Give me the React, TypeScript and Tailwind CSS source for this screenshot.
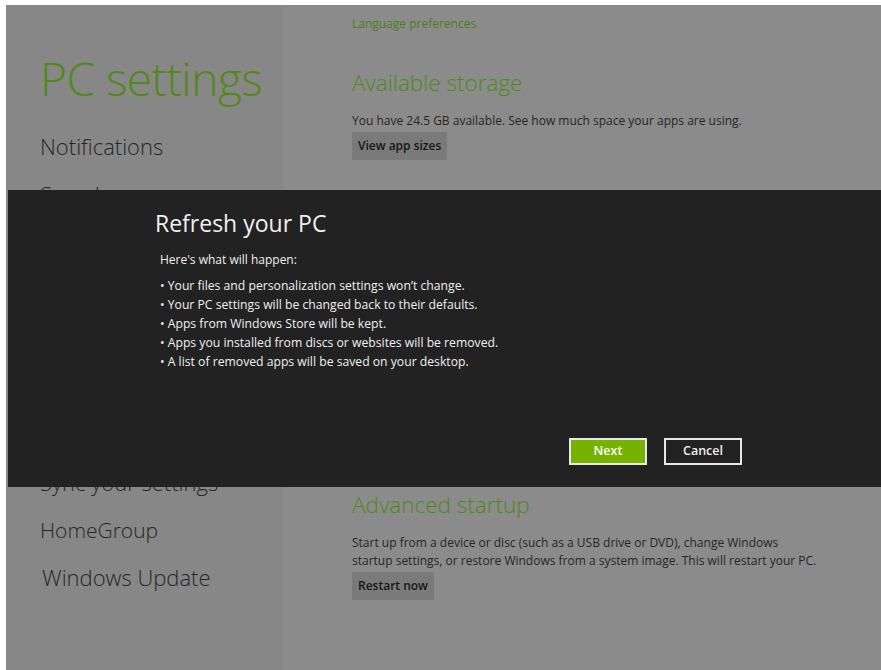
const font = { fontFamily: '"Open Sans", "Noto Sans", sans-serif' };

const navItems = [
  "Notifications",
  "Search",
  "Share",
  "General",
  "Privacy",
  "Devices",
  "Ease of Access",
  "Sync your settings",
];

const changes = [
  "Your files and personalization settings won’t change.",
  "Your PC settings will be changed back to their defaults.",
  "Apps from Windows Store will be kept.",
  "Apps you installed from discs or websites will be removed.",
  "A list of removed apps will be saved on your desktop.",
];

function SettingsNav() {
  return (
    <div className="w-[277px] shrink-0 bg-[#878787] pl-[34px] pt-[43px]">
      <h1 className="whitespace-nowrap text-[46px] font-light leading-[60px] text-[#4f8a17] tracking-[-0.5px]">
        PC settings
      </h1>
      <div className="mt-[23px]">
        {navItems.map((item) => (
          <div
            key={item}
            className="h-[48px] whitespace-nowrap text-[22px] font-light leading-[30px] text-[#262626]"
          >
            {item}
          </div>
        ))}
        <div className="h-[47px] text-[21px] font-light leading-[30px] text-[#262626]">
          HomeGroup
        </div>
        <div className="pl-[2px] text-[22px] font-light leading-[30px] text-[#262626]">
          Windows Update
        </div>
      </div>
    </div>
  );
}

function GreyButton({ label }: { label: string }) {
  return (
    <button className="h-[28px] bg-[#7a7a7a] px-[6px] text-[12px] font-semibold text-[#161616]">
      {label}
    </button>
  );
}

function SettingsDetail() {
  return (
    <div className="flex-1 overflow-hidden bg-[#8b8b8b] pl-[69px]">
      <p className="mt-[10px] text-[12px] leading-[18px] text-[#4b7f1a]">
        Language preferences
      </p>

      <h2 className="mt-[34px] text-[22.5px] font-light leading-[32px] text-[#4f8a17]">
        Available storage
      </h2>
      <p className="mt-[13px] text-[12px] leading-[18px] text-[#262626]">
        You have 24.5 GB available. See how much space your apps are using.
      </p>
      <div className="mt-[2px]">
        <GreyButton label="View app sizes" />
      </div>

      <h2 className="mt-[329px] text-[22.5px] font-light leading-[32px] text-[#4f8a17]">
        Advanced startup
      </h2>
      <p className="mt-[13px] whitespace-nowrap text-[12px] leading-[18px] text-[#262626]">
        Start up from a device or disc (such as a USB drive or DVD), change Windows
        <br />
        startup settings, or restore Windows from a system image. This will restart your PC.
      </p>
      <div className="mt-[2px]">
        <GreyButton label="Restart now" />
      </div>
    </div>
  );
}

function RefreshDialog() {
  return (
    <div className="absolute left-[8px] right-0 top-[190px] h-[297px] bg-[#222222] pl-[147px] pt-[16px]">
      <h2 className="text-[23px] font-normal leading-[34px] text-[#f0f0f0]">
        Refresh your PC
      </h2>
      <p className="mt-[10px] pl-[5px] text-[12px] leading-[19px] text-[#f0f0f0]">
        Here's what will happen:
      </p>
      <ul className="mt-[7px] pl-[5px] text-[12.2px] leading-[19px] text-[#f0f0f0]">
        {changes.map((line) => (
          <li key={line}>• {line}</li>
        ))}
      </ul>
      <div className="absolute left-[561px] top-[248px] flex gap-[17px]">
        <button className="h-[27px] w-[78px] border-2 border-[#e8e8e8] bg-[#76b300] text-[12.5px] font-semibold text-white">
          Next
        </button>
        <button className="h-[27px] w-[78px] border-2 border-[#e8e8e8] bg-[#222222] text-[12.5px] font-semibold text-[#eeeeee]">
          Cancel
        </button>
      </div>
    </div>
  );
}

export default function App() {
  return (
    <div
      style={font}
      className="relative flex h-[670px] w-[881px] overflow-hidden bg-white pl-[6px] pt-[5px]"
    >
      <SettingsNav />
      <SettingsDetail />
      <RefreshDialog />
    </div>
  );
}
